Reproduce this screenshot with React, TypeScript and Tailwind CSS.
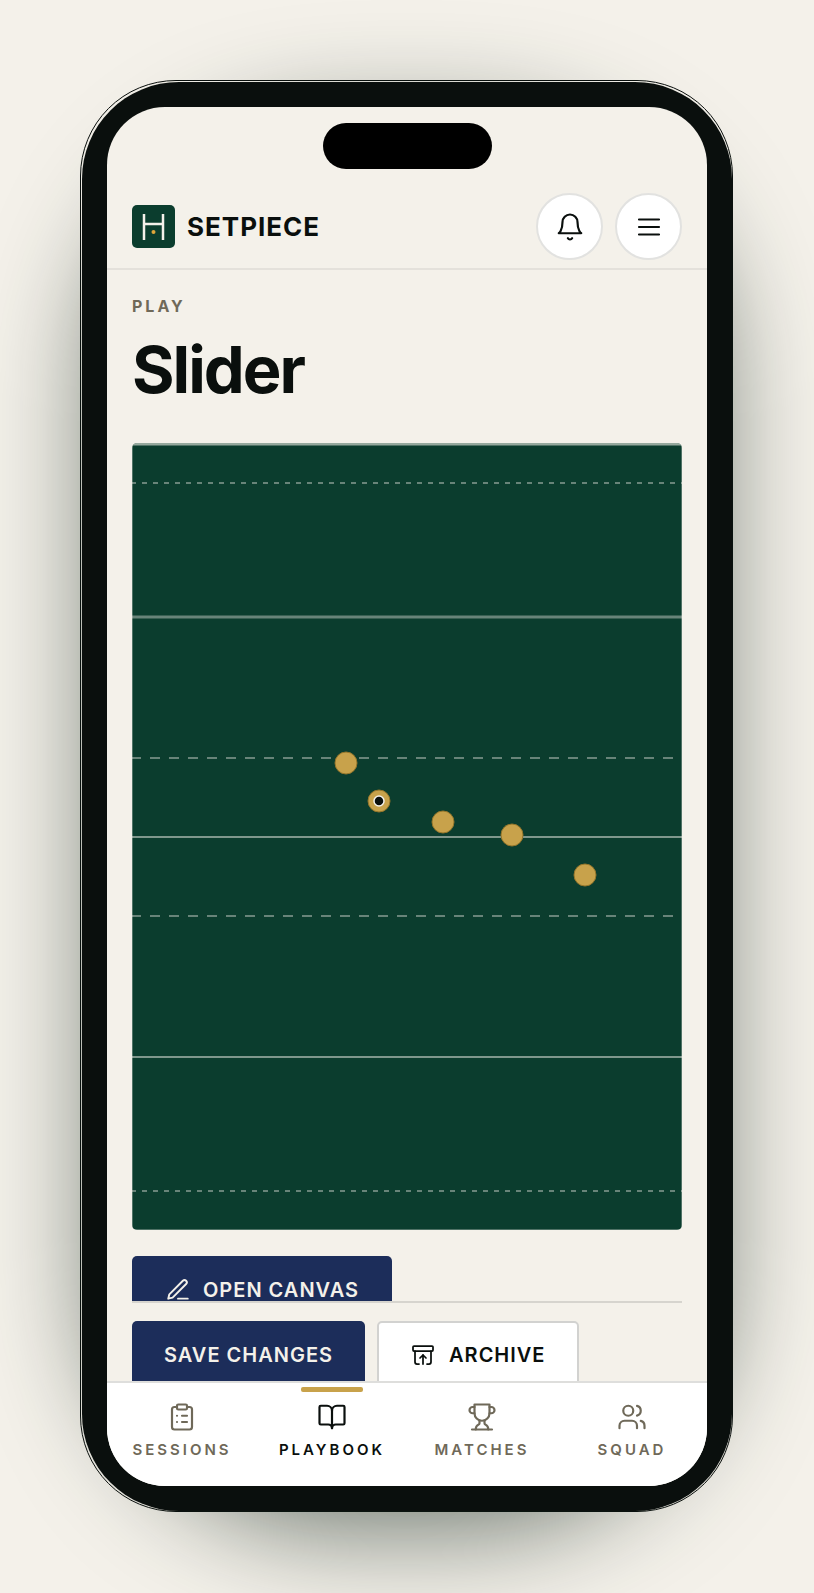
import type { ReactNode } from 'react';
import { ArchiveRestore, BookOpen, ClipboardList, Users } from 'lucide-react';

const PITCH_LINES = [
  { y: 40, width: 2, opacity: 0.4, dash: '5 6' },
  { y: 174, width: 3, opacity: 0.4, dash: undefined },
  { y: 315, width: 2, opacity: 0.4, dash: '10 9' },
  { y: 394, width: 2, opacity: 0.5, dash: undefined },
  { y: 473, width: 2, opacity: 0.4, dash: '10 9' },
  { y: 614, width: 2, opacity: 0.5, dash: undefined },
  { y: 748, width: 2, opacity: 0.4, dash: '5 6' },
];

const PLAYERS = [
  { x: 214, y: 320 },
  { x: 247, y: 358, ball: true },
  { x: 311, y: 379 },
  { x: 380, y: 392 },
  { x: 453, y: 432 },
];

const TABS = [
  { label: 'Sessions', icon: <ClipboardList size={30} strokeWidth={1.75} /> },
  { label: 'Playbook', icon: <BookOpen size={30} strokeWidth={1.75} />, active: true },
  {
    label: 'Matches',
    icon: (
      <StrokeIcon size={30}>
        <path d="M6 9H4.5a2.5 2.5 0 0 1 0-5H6M18 9h1.5a2.5 2.5 0 0 0 0-5H18M4 22h16" />
        <path d="M10 14.66V17c0 .55-.47.98-.97 1.21C7.85 18.75 7 20.24 7 22M14 14.66V17c0 .55.47.98.97 1.21C16.15 18.75 17 20.24 17 22" />
        <path d="M18 2H6v7a6 6 0 0 0 12 0V2Z" />
      </StrokeIcon>
    ),
  },
  { label: 'Squad', icon: <Users size={30} strokeWidth={1.75} /> },
];

function StrokeIcon({ size, children }: { size: number; children: ReactNode }) {
  return (
    <svg
      width={size}
      height={size}
      viewBox="0 0 24 24"
      fill="none"
      stroke="currentColor"
      strokeWidth="1.75"
      strokeLinecap="round"
      strokeLinejoin="round"
      aria-hidden="true"
    >
      {children}
    </svg>
  );
}

function Logo() {
  return (
    <svg viewBox="0 0 43 43" className="size-[43px]" aria-hidden="true">
      <rect width="43" height="43" rx="5" fill="#0b3d2e" />
      <path d="M12 9V35M31 9V35M12 19H31" stroke="#f4f1ea" strokeWidth="2.5" fill="none" />
      <circle cx="21.5" cy="27" r="2" fill="#e0a63a" />
    </svg>
  );
}

function RoundButton({ label, children }: { label: string; children: ReactNode }) {
  return (
    <button
      type="button"
      aria-label={label}
      className="flex size-[67px] items-center justify-center rounded-full border-2 border-[#e2e2e0] bg-white"
    >
      {children}
    </button>
  );
}

function Pitch() {
  return (
    <svg viewBox="0 0 550 787" className="block w-full rounded-[5px] bg-[#0b3d2e]" role="img" aria-label="Slider play">
      <path d="M0 1H550" stroke="#f4f1ea" strokeOpacity="0.6" strokeWidth="3" />
      <path d="M0 0V787M550 0V787M0 787H550" stroke="#f4f1ea" strokeOpacity="0.6" />
      {PITCH_LINES.map(line => (
        <line
          key={line.y}
          x1="0"
          x2="550"
          y1={line.y}
          y2={line.y}
          stroke="#f4f1ea"
          strokeOpacity={line.opacity}
          strokeWidth={line.width}
          strokeDasharray={line.dash}
          strokeDashoffset="1"
        />
      ))}
      {PLAYERS.map(p => (
        <g key={p.x}>
          <circle cx={p.x} cy={p.y} r="11" fill="#c8a24b" stroke="#94752a" strokeWidth="1" />
          {p.ball && <circle cx={p.x} cy={p.y} r="5" fill="#0a0f0d" stroke="#f4f1ea" strokeWidth="1.5" />}
        </g>
      ))}
    </svg>
  );
}

export default function App() {
  return (
    <div className="min-h-screen overflow-hidden bg-[#f4f1ea] p-20 font-['Inter',sans-serif] text-[#0a0f0d]">
      <div className="relative isolate mr-px rounded-[96px] border border-[#0a0f0d] pt-px pl-px">
        {/* soft shadow under the phone */}
        <div className="absolute inset-x-4 top-12 -bottom-4 -z-10 rounded-[240px] bg-[#0a1e14]/60 blur-[56px]" />
        <div className="rounded-[97px] bg-[#0a0f0d] p-[25px]">
          <div className="flex flex-col overflow-hidden rounded-[58px] bg-[#f4f1ea]">
            <div className="flex justify-center pt-4">
              <div className="h-[46px] w-[169px] rounded-full bg-black" />
            </div>

            <header className="flex items-center justify-between border-b-2 border-[#e4e1db] px-[25px] pt-6 pb-2">
              <a href="#home" className="flex items-center gap-3">
                <Logo />
                <span className="text-[26px] font-bold tracking-[1px]">SETPIECE</span>
              </a>
              <div className="flex gap-3">
                <RoundButton label="Notifications">
                  <StrokeIcon size={30}>
                    <path d="M6 8a6 6 0 0 1 12 0c0 7 3 9 3 9H3s3-2 3-9M10.3 21a1.94 1.94 0 0 0 3.4 0" />
                  </StrokeIcon>
                </RoundButton>
                <RoundButton label="Menu">
                  <StrokeIcon size={30}>
                    <path d="M4 6h16M4 12h16M4 18h16" />
                  </StrokeIcon>
                </RoundButton>
              </div>
            </header>

            <main className="px-[25px]">
              <p className="mt-6 text-[16px] leading-6 font-bold tracking-[3px] text-[#6f6959]">PLAY</p>
              <h1 className="mt-4 text-[65px] leading-[72px] font-bold tracking-[-2px]">Slider</h1>
              <div className="mt-[37px]">
                <Pitch />
              </div>

              <div className="mt-[26px] h-[45px] overflow-hidden">
                <button
                  type="button"
                  className="flex h-[67px] items-center gap-3 rounded-[5px] bg-[#1c2d5a] px-[33px] text-[20px] font-semibold tracking-[1px] text-[#f4f1ea]"
                >
                  <StrokeIcon size={26}>
                    <path d="M12 20h9M16.5 3.5a2.12 2.12 0 0 1 3 3L7 19l-4 1 1-4Z" />
                  </StrokeIcon>
                  OPEN CANVAS
                </button>
              </div>
              <div className="h-[80px] overflow-hidden border-t-2 border-[#d6d4ce] pt-[18px]">
                <div className="flex gap-3">
                  <button
                    type="button"
                    className="h-[67px] rounded-[5px] bg-[#1c2d5a] px-8 text-[20px] font-semibold tracking-[1px] text-[#f4f1ea]"
                  >
                    SAVE CHANGES
                  </button>
                  <button
                    type="button"
                    className="flex h-[67px] items-center gap-3.5 rounded-[5px] border-2 border-[#d2d2d0] bg-white px-8 text-[20px] font-semibold tracking-[1px]"
                  >
                    <ArchiveRestore size={24} strokeWidth={1.75} />
                    ARCHIVE
                  </button>
                </div>
              </div>
            </main>

            <nav className="grid grid-cols-4 border-t-2 border-[#dededc] bg-white">
              {TABS.map(({ label, icon, active }) => (
                <a
                  key={label}
                  href={`#${label.toLowerCase()}`}
                  aria-current={active ? 'page' : undefined}
                  className={`relative flex h-[103px] flex-col items-center gap-2 pt-[19px] text-[15px] leading-5 font-semibold tracking-[3px] uppercase ${active ? 'text-[#0a0f0d]' : 'text-[#6f6959]'}`}
                >
                  {active && <span className="absolute top-1 h-[5px] w-[62px] rounded-[2px] bg-[#c8a24b]" />}
                  {icon}
                  {label}
                </a>
              ))}
            </nav>
          </div>
        </div>
      </div>
    </div>
  );
}
